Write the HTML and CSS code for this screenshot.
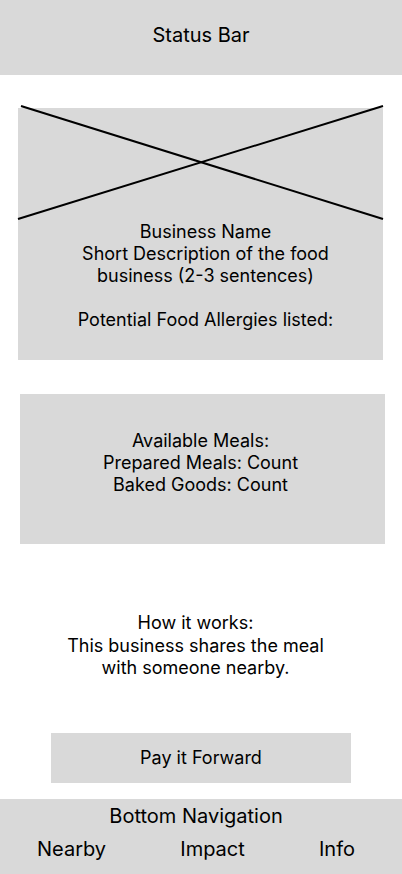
FILE: index.html
```html
<!DOCTYPE html>
<html lang="en">
<head>
<meta charset="utf-8">
<title>Business Detail</title>
<link rel="stylesheet" href="styles.css">
</head>
<body>
<div class="screen">
  <header class="status-bar">Status Bar</header>
  <main class="content">
    <section class="business-card">
      <svg class="cross" width="365" height="115" viewBox="0 0 365 115" aria-hidden="true">
        <line x1="3" y1="0" x2="365" y2="113" stroke="#000" stroke-width="2"/>
        <line x1="0" y1="113" x2="365" y2="0" stroke="#000" stroke-width="2"/>
      </svg>
      <div class="image-slot"></div>
      <div class="business-text">
        <p>Business Name<br>Short Description of the food<br>business (2-3 sentences)</p>
        <p class="allergies">Potential Food Allergies listed:</p>
      </div>
    </section>
    <section class="meals-card">
      <p>Available Meals:<br>Prepared Meals: Count<br>Baked Goods: Count</p>
    </section>
    <section class="how">
      <p>How it works:<br>This business shares the meal<br>with someone nearby.</p>
    </section>
    <div class="action">
      <button class="pay-btn" type="button">Pay it Forward</button>
    </div>
  </main>
  <nav class="bottom-nav">
    <div class="nav-title">Bottom Navigation</div>
    <div class="nav-items">
      <span class="nav-item">Nearby</span>
      <span class="nav-item">Impact</span>
      <span class="nav-item">Info</span>
    </div>
  </nav>
</div>
</body>
</html>
```
FILE: styles.css
```css
* { box-sizing: border-box; }
html, body { margin: 0; padding: 0; background: #fff; }
body {
  font-family: Inter, "Noto Sans", "Liberation Sans", sans-serif;
  color: #000;
}
p { margin: 0; }
.screen {
  width: 402px;
  height: 874px;
  display: flex;
  flex-direction: column;
}
.status-bar {
  height: 75px;
  background: #d9d9d9;
  display: flex;
  align-items: center;
  justify-content: center;
  font-size: 20px;
  padding-bottom: 5px;
}
.content {
  flex: 1;
  display: flex;
  flex-direction: column;
}
.business-card {
  position: relative;
  margin: 33px 0 0 18px;
  width: 365px;
  height: 252px;
  background: #d9d9d9;
  text-align: center;
  font-size: 18px;
  line-height: 22px;
}
.cross {
  position: absolute;
  left: 0;
  top: -2px;
  overflow: visible;
}
.image-slot { height: 111px; }
.business-text { padding: 2px 0 0 10px; }
.allergies { margin-top: 22px; }
.meals-card {
  margin: 34px 0 0 20px;
  width: 365px;
  height: 150px;
  background: #d9d9d9;
  text-align: center;
  font-size: 18px;
  line-height: 22px;
  padding: 36px 4px 0 0;
}
.how {
  margin-top: 68px;
  padding-right: 11px;
  text-align: center;
  font-size: 18px;
  line-height: 22.5px;
}
.action {
  margin-top: 53px;
  display: flex;
  justify-content: center;
}
.pay-btn {
  width: 300px;
  height: 50px;
  border: 0;
  border-radius: 0;
  background: #d9d9d9;
  font-family: inherit;
  font-size: 18px;
  color: #000;
  padding: 0;
}
.bottom-nav {
  height: 75px;
  background: #d9d9d9;
  display: flex;
  flex-direction: column;
}
.nav-title {
  text-align: center;
  font-size: 20px;
  line-height: 24px;
  padding: 5px 10px 0 0;
}
.nav-items {
  display: flex;
  justify-content: space-between;
  padding: 9px 47px 0 37px;
  font-size: 20px;
  line-height: 24px;
}
```
